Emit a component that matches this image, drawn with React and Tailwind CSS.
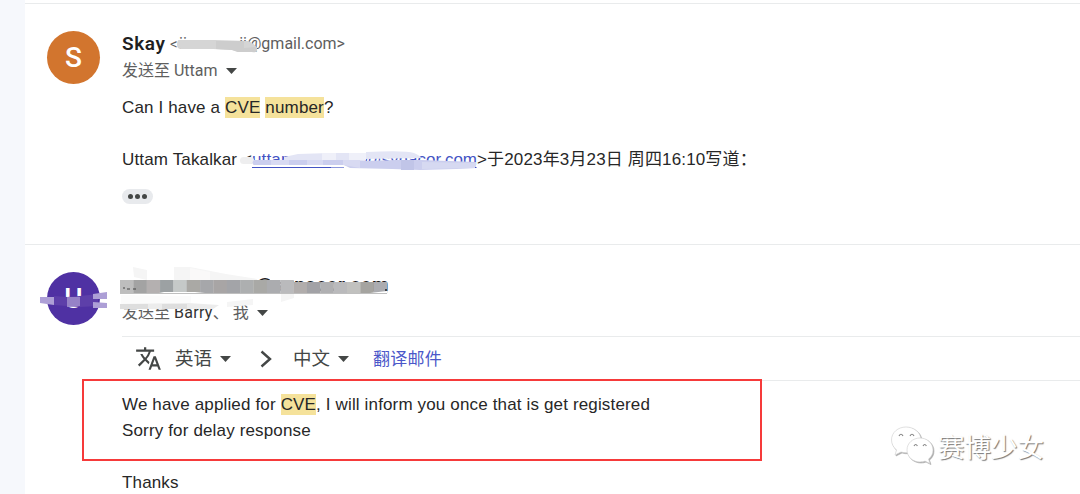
import { MdTranslate } from "react-icons/md";

function Mark({ children }) {
  return <span className="bg-[#f5e29b] py-px">{children}</span>;
}

function Caret() {
  return (
    <svg className="h-[6px] w-[11px]" viewBox="0 0 11 6" fill="#444746">
      <path d="M0 0h11L5.500 6z" />
    </svg>
  );
}

function Avatar({ letter, color }) {
  return (
    <div
      className={`flex h-[53px] w-[53px] shrink-0 items-center justify-center rounded-full font-[Roboto,sans-serif] text-[28px] font-medium text-white ${color}`}
    >
      {letter}
    </div>
  );
}

function FirstMessage() {
  return (
    <section className="flex h-[241px] gap-[22px] border-b border-[#e9ebec] pt-[26px] pl-[22px]">
      <div className="pt-px">
        <Avatar letter="S" color="bg-[#d2752e]" />
      </div>
      <div className="flex flex-col">
        <div className="flex h-[28px] items-center font-[Roboto,sans-serif] tracking-normal">
          <span className="w-[48px] text-[19px] font-semibold tracking-[0.6px] text-[#1f1f1f]">Skay</span>
          <span className="w-[9px] text-[15px] text-[#5e5e5e]">&lt;</span>
          <span className="flex w-[68px] justify-between text-[16px] text-[#5e5e5e]">
            <span>iicau</span>
            <span>ii</span>
          </span>
          <span className="text-[16px] text-[#5e5e5e]">@gmail.com&gt;</span>
        </div>
        <div className="flex h-[26px] items-center gap-[8px] font-[Roboto,'Noto_Sans_CJK_SC',sans-serif] text-[16px] tracking-normal text-[#5e5e5e]">
          <span>发送至 Uttam</span>
          <Caret />
        </div>
        <p className="mt-[11px] h-[26px]">
          Can I have a <Mark>CVE</Mark> <Mark>number</Mark>?
        </p>
        <p className="mt-[26px] flex h-[26px] whitespace-nowrap">
          <span className="w-[130px]">Uttam Takalkar &lt;</span>
          <span className="flex w-[225px] justify-between text-[#4454c4]">
            <span>uttam</span>
            <span className="tracking-normal">@synacor.com</span>
          </span>
          <span>&gt;于2023年3月23日 周四16:10写道：</span>
        </p>
        <div className="mt-[16px] flex h-[15px] w-[31px] items-center justify-center gap-[2px] rounded-full bg-[#e8eaed]">
          <i className="h-[5px] w-[5px] rounded-full bg-[#444746]" />
          <i className="h-[5px] w-[5px] rounded-full bg-[#444746]" />
          <i className="h-[5px] w-[5px] rounded-full bg-[#444746]" />
        </div>
      </div>
    </section>
  );
}

function SecondMessage() {
  return (
    <section className="flex gap-[22px] pt-[27px] pl-[22px]">
      <Avatar letter="U" color="bg-[#4f31a3]" />
      <div className="flex flex-1 flex-col">
        <div className="flex h-[27px] items-center pb-[2px] pl-[134px] font-[Roboto,sans-serif] text-[19px] font-bold tracking-[0.6px] text-[#1f1f1f]">
          @synacor.com
        </div>
        <div className="flex h-[27px] items-center gap-[8px] font-[Roboto,'Noto_Sans_CJK_SC',sans-serif] text-[16px] tracking-normal text-[#5e5e5e]">
          <span>
            发送至 <span className="tracking-[0.3px] text-[#333]">Barry</span>、 我
          </span>
          <Caret />
        </div>
        <div className="mt-[10px] flex h-[45px] items-center border-y border-[#e9ebec] pl-[13px] font-['Noto_Sans_CJK_SC',sans-serif] text-[18.500px] tracking-normal text-[#444746]">
          <MdTranslate className="mr-[13px] h-[27px] w-[27px]" />
          <span className="mr-[8px] pb-[3px]">英语</span>
          <Caret />
          <svg className="mr-[21px] ml-[29px] h-[18px] w-[12px]" viewBox="0 0 12 18" fill="none" stroke="#444746" strokeWidth="2.400">
            <path d="M1.500 1.500 10 9l-8.500 7.500" />
          </svg>
          <span className="mr-[8px] pb-[3px]">中文</span>
          <Caret />
          <span className="ml-[24px] pb-px text-[17px] tracking-[0.2px] text-[#4b57c9]">翻译邮件</span>
        </div>
        <div className="mt-[11px]">
          <p className="h-[26px]">
            We have applied for <Mark>CVE</Mark>, I will inform you once that is get registered
          </p>
          <p className="h-[26px]">Sorry for delay response</p>
          <p className="mt-[26px] h-[26px]">Thanks</p>
        </div>
      </div>
    </section>
  );
}

const barColors = [
  "#bdbdbd", "#a3a3a3", "#b4b0b0", "#9ca1a3", "#c5c9c8", "#aaa9a5", "#a6a7aa", "#a8a5a5", "#a3a4a8", "#adafb0",
  "#a9a9a6", "#abacaf", "#bababc", "#b1adac", "#a2a2a6", "#b0b0b2", "#bababc", "#c1c1bf", "#a5a4a0", "#abacb0",
];

// Brush strokes drawn over the private addresses
function Smudges() {
  return (
    <svg className="pointer-events-none absolute top-0 left-0 h-[494px] w-[1080px]" viewBox="0 0 1080 494">
      <path d="M179 40h36l33 1q9 4 9 8 0 3-4 3h-15l-6-2-19-1h-32q-4 0-4-4 0-5 2-5z" fill="#d5d5d5" />
      <path d="M216 41h28v7l13-1v4q-2 2-5 1h-14l-6-2-16-1z" fill="#cdcdcd" />

      <rect x="240" y="157" width="14" height="7" rx="3.500" fill="#eeeeef" />
      <path d="M284 157l14-3 32-1h36v-1q40-2 48 1 7 3 7 5l-56 1v3h-81z" fill="#e3e5f5" />
      <path d="M322 153h14v7h-14zM349 153h17v7h-17z" fill="#eff0f9" />
      <path d="M254 160h90l20 1 32-1h26l54 2v6l-20 1-36 1-28-1-42-1-6-3h-90q-3-2 0-5z" fill="#cbceee" />
      <path d="M271 160h18v5h-18zM307 160h16v5h-16zM343 160h17v8l-17-3z" fill="#d8daf2" />
      <path d="M401 160h13v10h-13z" fill="#c1c5e8" />
      <path d="M422 162l54 1v5l-54 1z" fill="#d6d9f1" />
      <path d="M252 167.500h79" stroke="#4454c4" />
      <path d="M331 167.500h13" stroke="#8d98dc" />
      <path d="M475 167.500h1.500" stroke="#4454c4" />

      <path d="M133 267l14 3v10l-13-3zM174 267h16l36 7 31 5v2h-83z" fill="#f5f5f5" />
      <path d="M190 268l20 4v8h-20z" fill="#faf9f9" />
      <path d="M121 295l70 1v8h-70z" fill="#fbfbfb" />
      <path d="M254 293h134v5h-134zM270 278h21v4h-21z" fill="#fff" />
      <path d="M281 293h13v5l-13 4zM227 302l26-3v6l-26 2z" fill="#f5f5f5" />
      {barColors.map((fill, i) => (
        <rect key={fill + i} x={120 + i * 13.35} y={i > 12 ? 282 : 280} width="13.600" height={i > 12 ? 11 : 14} fill={fill} />
      ))}
      <path d="M154 294l10-2h31l20 2zM370 293l17-2v3h-17z" fill="#fff" />
      <path d="M120 293.500h267" stroke="#bfbfbf" />
      <path d="M123 288h2m2 1h3m3 0h3" stroke="#444" strokeWidth="1.200" />
      <path d="M385 290h2" stroke="#222" strokeWidth="1.500" />

      <path d="M120 304l68-1 31 2-6 4h-65l-28-1z" fill="#ececec" />
      <path d="M120 304h28v5h-28zM162 304h25v5h-25z" fill="#dedede" />

      <path d="M40 297h14v8l-14-2z" fill="#ad9fd6" />
      <path d="M54 296l13 1 13-1 18-2v12l-18 1-26-2z" fill="#5d3fa9" />
      <path d="M67 297h13v9l-13 1z" fill="#9682c7" />
      <path d="M93 294l14-2v7h-14zM93 302l14 1v5h-14z" fill="#ad9fd6" />
    </svg>
  );
}

function Watermark() {
  return (
    <div className="absolute top-[426px] left-[890px] flex items-center gap-[3px]">
      <svg className="h-[40px] w-[45px] drop-shadow-[1px_1px_0.500px_#aaa]" viewBox="0 0 45 40" fill="#fff" stroke="#ccc" strokeWidth="0.600">
        <path d="M16 1C8 1 1.500 6.500 1.500 14c0 4 2 7.500 5 10l-1.500 5 6-3c2 .6 4 .9 6 .7C25 26.500 31 21 31 14 31 6.500 24 1 16 1z" />
        <path d="M30 12c-7 0-13 5-13 12s6 12 13 12c2 0 3.500-.3 5-.9l5 2.500-1.500-4.500c3-2.200 4.500-5.400 4.500-9.100 0-7-6-12-13-12z" />
        <g fill="none" stroke="#888" strokeWidth="1.200">
          <path d="M9 10q2-3.500 4 0M20 10q2-3.500 4 0M24 20q1.700-3 3.400 0M33 20q1.700-3 3.400 0" />
        </g>
      </svg>
      <span className="pb-px font-['Noto_Sans_CJK_SC',sans-serif] text-[26.500px] leading-[39px] tracking-normal whitespace-nowrap text-white [text-shadow:1px_1px_1px_#777]">
        赛博少女
      </span>
    </div>
  );
}

export default function App() {
  return (
    <div className="relative flex h-[494px] w-[1080px] overflow-hidden bg-[#f6f8fc] pl-[25px] font-['Liberation_Sans','Noto_Sans_CJK_SC',sans-serif] text-[17px] leading-[26px] tracking-[0.150px] text-[#272727]">
      <main className="flex-1 bg-white">
        <div className="h-[4px] border-b border-[#e9ebec]" />
        <FirstMessage />
        <SecondMessage />
      </main>
      <Smudges />
      <div className="absolute top-[379px] left-[82px] h-[82px] w-[680px] border-2 border-[#f63a3a]" />
      <Watermark />
    </div>
  );
}
